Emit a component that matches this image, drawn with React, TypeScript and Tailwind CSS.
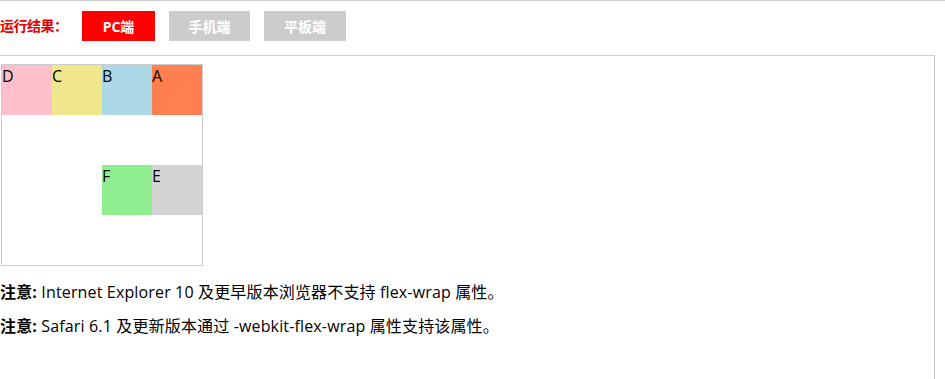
import React from 'react';

type Item = {
    label: string;
    color: string;
};

const items: Item[] = [
    {label: 'A', color: 'bg-[#ff7f50]'},
    {label: 'B', color: 'bg-[#add8e6]'},
    {label: 'C', color: 'bg-[#f0e68c]'},
    {label: 'D', color: 'bg-[#ffc0cb]'},
    {label: 'E', color: 'bg-[#d3d3d3]'},
    {label: 'F', color: 'bg-[#90ee90]'},
];

const tabs = [
    {label: 'PC端', active: true, width: 'w-[73px]'},
    {label: '手机端', active: false, width: 'w-[81px]'},
    {label: '平板端', active: false, width: 'w-[82px]'},
];

const font = 'font-["Open_Sans","Noto_Sans_CJK_SC",sans-serif]';

export default function App() {
    return (
        <div className={`w-[945px] h-[379px] overflow-hidden bg-white text-black ${font}`}>
            <div className={'border-t border-[#cccccc] h-[55px] flex items-start pt-[10px]'}>
                <span className={'text-[14px] leading-[30px] font-bold text-[#e60000] w-[82px] tracking-[-0.5px]'}>运行结果：</span>
                <div className={'flex gap-[14px]'}>
                    {tabs.map(tab => (
                        <button
                            key={tab.label}
                            className={`${tab.width} h-[30px] text-[14px] font-bold text-white ${tab.active ? 'bg-[#ff0000]' : 'bg-[#cccccc]'}`}>
                            {tab.label}
                        </button>
                    ))}
                </div>
            </div>
            <div className={'w-[935px] h-[330px] border-t border-r border-[#cccccc] pt-[8px] pl-[1px]'}>
                <div className={'w-[202px] h-[202px] border border-[#cccccc] flex flex-row-reverse flex-wrap'}>
                    {items.map(item => (
                        <div key={item.label} className={`w-[50px] h-[50px] ${item.color} text-[16px] leading-[22px]`}>
                            {item.label}
                        </div>
                    ))}
                </div>
                <p className={'mt-[16px] text-[16px] leading-[20px] -ml-[1px] tracking-[0.15px]'}>
                    <b>注意:</b> Internet Explorer 10 及更早版本浏览器不支持 flex-wrap 属性。
                </p>
                <p className={'mt-[14px] text-[16px] leading-[20px] -ml-[1px] tracking-[0.15px]'}>
                    <b>注意:</b> Safari 6.1 及更新版本通过 -webkit-flex-wrap 属性支持该属性。
                </p>
            </div>
        </div>
    );
}
